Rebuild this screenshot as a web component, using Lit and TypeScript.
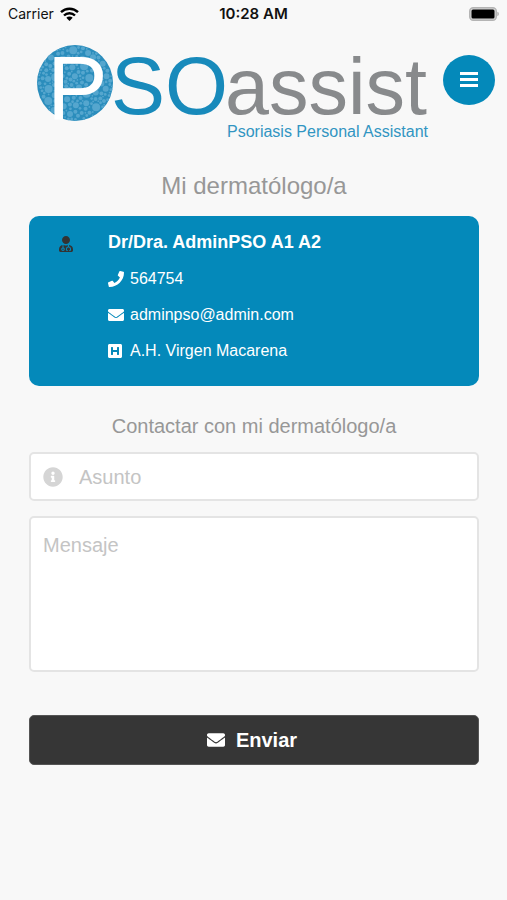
import { LitElement, html, css, svg } from "lit";
import { customElement, property, state } from "lit/decorators.js";

interface Glyph {
  box: string;
  path: string;
}

const GLYPHS: Record<string, Glyph> = {
  envelope: {
    box: "0 0 512 512",
    path: "M502.3 190.8c3.9-3.1 9.7-.2 9.7 4.7V400c0 26.5-21.5 48-48 48H48c-26.5 0-48-21.5-48-48V195.6c0-5 5.7-7.8 9.7-4.7 22.4 17.4 52.1 39.5 154.1 113.6 21.1 15.4 56.7 47.8 92.2 47.6 35.7.3 72-32.8 92.3-47.6 102-74.1 131.6-96.3 154-113.7zM256 320c23.2.4 56.6-29.2 73.4-41.4 132.7-96.3 142.8-104.7 173.4-128.7 5.8-4.5 9.2-11.5 9.2-18.9v-19c0-26.5-21.5-48-48-48H48c-26.5 0-48 21.5-48 48v19c0 7.4 3.4 14.3 9.2 18.9 30.6 23.9 40.7 32.4 173.4 128.7 16.8 12.2 50.2 41.8 73.4 41.4z",
  },
  phone: {
    box: "0 0 512 512",
    path: "M493.4 24.6l-104-24c-11.3-2.6-22.9 3.3-27.5 13.9l-48 112c-4.2 9.8-1.4 21.3 6.9 28l60.6 49.6c-36 76.7-98.9 140.5-177.2 177.2l-49.6-60.6c-6.8-8.3-18.2-11.1-28-6.9l-112 48C3.9 366.5-2 378.1.6 389.4l24 104C27.1 504.2 36.7 512 48 512c256.1 0 464-207.5 464-464 0-11.2-7.7-20.9-18.6-23.4z",
  },
  hospital: {
    box: "0 0 512 512",
    path: "M448 80v352c0 26.51-21.49 48-48 48H48c-26.51 0-48-21.49-48-48V80c0-26.51 21.49-48 48-48h352c26.51 0 48 21.49 48 48zm-112 48h-32c-8.837 0-16 7.163-16 16v80H160v-80c0-8.837-7.163-16-16-16h-32c-8.837 0-16 7.163-16 16v224c0 8.837 7.163 16 16 16h32c8.837 0 16-7.163 16-16v-80h128v80c0 8.837 7.163 16 16 16h32c8.837 0 16-7.163 16-16V144c0-8.837-7.163-16-16-16z",
  },
  info: {
    box: "0 0 512 512",
    path: "M256 8C119.043 8 8 119.083 8 256c0 136.997 111.043 248 248 248s248-111.003 248-248C504 119.083 392.957 8 256 8zm0 110c23.196 0 42 18.804 42 42s-18.804 42-42 42-42-18.804-42-42 18.804-42 42-42zm56 254c0 6.627-5.373 12-12 12h-88c-6.627 0-12-5.373-12-12v-24c0-6.627 5.373-12 12-12h12v-64h-12c-6.627 0-12-5.373-12-12v-24c0-6.627 5.373-12 12-12h64c6.627 0 12 5.373 12 12v100h12c6.627 0 12 5.373 12 12v24z",
  },
  doctor: {
    box: "0 0 448 512",
    path: "M224 256c70.7 0 128-57.3 128-128S294.7 0 224 0 96 57.3 96 128s57.3 128 128 128zM104 424c0 13.3 10.7 24 24 24s24-10.7 24-24-10.7-24-24-24-24 10.7-24 24zm216-135.4v49c36.5 7.4 64 39.8 64 78.4v41.7c0 7.6-5.4 14.2-12.9 15.7l-32.2 6.4c-4.3.9-8.5-1.9-9.4-6.3l-3.1-15.7c-.9-4.3 1.9-8.6 6.3-9.4l19.3-3.9V416c0-62.8-96-65.1-96 1.9v26.7l19.3 3.9c4.3.9 7.1 5.1 6.3 9.4l-3.1 15.7c-.9 4.3-5.1 7.1-9.4 6.3l-31.2-4.2c-7.9-1.1-13.8-7.8-13.8-15.9V416c0-38.6 27.5-70.9 64-78.4v-45.2c-2.2.7-4.4 1.1-6.6 1.9-18 6.3-37.3 9.8-57.4 9.8s-39.4-3.5-57.4-9.8c-7.4-2.6-14.9-4.2-22.6-5.2v81.6c23.1 6.9 40 28.1 40 53.4 0 30.9-25.1 56-56 56s-56-25.1-56-56c0-25.3 16.9-46.5 40-53.4v-80.4C48.5 301 0 355.8 0 422.4v44.8C0 491.9 20.1 512 44.8 512h358.4c24.7 0 44.8-20.1 44.8-44.8v-44.8c0-72-56.8-130.3-128-133.8z",
  },
  bars: {
    box: "0 0 18 16",
    path: "M0 0h18v3H0zM0 6h18v3H0zM0 12h18v3H0z",
  },
};

@customElement("ui-glyph")
export class UiGlyph extends LitElement {
  @property() name = "envelope";

  static styles = css`
    :host {
      display: block;
      flex: none;
    }
    .glyph {
      display: block;
      width: 100%;
      height: 100%;
      fill: currentColor;
    }
  `;

  render() {
    const glyph = GLYPHS[this.name];
    return html`<svg class="glyph" viewBox=${glyph.box} aria-hidden="true">
      <path fill-rule="evenodd" d=${glyph.path}></path>
    </svg>`;
  }
}

interface Cell {
  x: number;
  y: number;
  r: number;
}

/** Packs non-overlapping cells of shrinking size into the emblem disc. */
function packCells(cx: number, cy: number, radius: number): Cell[] {
  let seed = 20;
  const next = () => {
    seed = (seed * 1103515245 + 12345) % 2147483648;
    return seed / 2147483648;
  };
  const cells: Cell[] = [];
  for (const [r, tries] of [[4, 30], [3, 60], [2, 500], [1.4, 1500], [0.9, 2000]]) {
    for (let i = 0; i < tries; i++) {
      const x = cx + (next() * 2 - 1) * radius;
      const y = cy + (next() * 2 - 1) * radius;
      if (Math.hypot(x - cx, y - cy) > radius - r) continue;
      if (cells.every((c) => Math.hypot(c.x - x, c.y - y) > c.r + r + 0.3)) {
        cells.push({ x, y, r });
      }
    }
  }
  return cells;
}

const CELLS = packCells(38, 39, 38);

@customElement("brand-logo")
export class BrandLogo extends LitElement {
  static styles = css`
    :host {
      display: block;
    }
    .logo {
      display: block;
      width: 100%;
      height: auto;
      overflow: visible;
      font-family: "Liberation Sans", Arial, sans-serif;
    }
    .disc {
      fill: #2b8dbc;
    }
    .cell {
      fill: #55a6ce;
    }
    .initial {
      fill: #fff;
      font-size: 91px;
    }
    .strong {
      fill: #188abb;
      font-size: 81px;
    }
    .soft {
      fill: #888a8c;
      font-size: 79px;
    }
    .tagline {
      fill: #3195c2;
      font-size: 16px;
    }
  `;

  render() {
    return html`<svg class="logo" viewBox="0 0 392 98" role="img" aria-label="PSOassist, Psoriasis Personal Assistant">
      <circle class="disc" cx="38" cy="39" r="38"></circle>
      ${CELLS.map((c) => svg`<circle class="cell" cx=${c.x} cy=${c.y} r=${c.r}></circle>`)}
      <text class="initial" x="10" y="75">P</text>
      <text class="strong" x="74" y="70">SO</text>
      <text class="soft" x="188" y="70">assist</text>
      <text class="tagline" x="190" y="93">Psoriasis Personal Assistant</text>
    </svg>`;
  }
}

@customElement("status-bar")
export class StatusBar extends LitElement {
  static styles = css`
    :host {
      display: grid;
      grid-template-columns: 1fr auto 1fr;
      align-items: center;
      height: 28px;
      padding: 0 8px;
      font: 14px/20px Inter, sans-serif;
      color: #111;
    }
    .carrier {
      display: flex;
      align-items: center;
      gap: 6px;
    }
    .wifi {
      width: 19px;
      height: 14px;
    }
    .time {
      font-size: 15px;
      font-weight: 600;
    }
    .battery {
      justify-self: end;
      width: 30px;
      height: 14px;
    }
  `;

  render() {
    return html`
      <div class="carrier">
        <span>Carrier</span>
        <svg class="wifi" viewBox="0 0 19 14" aria-hidden="true">
          <g fill="none" stroke="#000" stroke-width="2.4">
            <path d="M1 5.2a12.2 12.2 0 0 1 17 0"></path>
            <path d="M4 8.5a7.8 7.8 0 0 1 11 0"></path>
          </g>
          <path d="M9.500 14L6.300 10.700a4.600 4.600 0 0 1 6.400 0z"></path>
        </svg>
      </div>
      <div class="time">10:28 AM</div>
      <svg class="battery" viewBox="0 0 30 14" aria-hidden="true">
        <rect x=".7" y=".7" width="26.600" height="12.600" rx="3.500" fill="#d4d4d4" stroke="#b4b4b4" stroke-width="1.400"></rect>
        <rect x="2.500" y="2.500" width="23" height="9" rx="1.500"></rect>
        <path d="M28.400 4.800a2.400 2.400 0 0 1 0 4.400z" fill="#a9a9a9"></path>
      </svg>
    `;
  }
}

@customElement("app-root")
export class AppRoot extends LitElement {
  @state() private subject = "";
  @state() private message = "";

  static styles = css`
    :host {
      display: block;
      min-height: 100vh;
      background: #f8f8f8;
      font-family: "Liberation Sans", Arial, sans-serif;
    }
    .header {
      display: flex;
      align-items: flex-start;
      gap: 14px;
      padding: 16px 12px 0 37px;
    }
    .logo {
      flex: 1;
    }
    .menu {
      display: grid;
      place-items: center;
      width: 52px;
      height: 50px;
      margin: 11px 0 0;
      padding: 0;
      border: 0;
      border-radius: 50%;
      background: #0489ba;
      color: #fff;
    }
    .menu-icon {
      width: 18px;
      height: 16px;
    }
    .main {
      padding: 28px 28px 40px 29px;
    }
    .title,
    .subtitle {
      margin: 0;
      font-weight: 400;
      text-align: center;
      color: #979797;
    }
    .title {
      font-size: 24px;
      line-height: 32px;
    }
    .subtitle {
      margin-top: 28px;
      font-size: 20px;
      line-height: 24px;
    }
    .card {
      display: flex;
      align-items: flex-start;
      gap: 34px;
      margin-top: 14px;
      padding: 14px 29px 23px;
      border-radius: 10px;
      background: #0489ba;
      color: #fff;
    }
    .doctor {
      width: 16px;
      height: 16px;
      margin-top: 6px;
      color: #333;
    }
    .name {
      margin: 0 0 13px;
      font-size: 18px;
      line-height: 24px;
    }
    .contacts {
      display: grid;
      gap: 12px;
      margin: 0;
      padding: 0;
      list-style: none;
      font-size: 16px;
      line-height: 24px;
    }
    .contact {
      display: flex;
      align-items: center;
      gap: 6px;
    }
    .contact-icon {
      width: 16px;
      height: 16px;
    }
    .link {
      color: inherit;
      text-decoration: none;
    }
    .form {
      display: grid;
      gap: 15px;
      margin-top: 14px;
    }
    .field,
    .message {
      box-sizing: border-box;
      border: 2px solid #e4e4e4;
      border-radius: 5px;
      background: #fff;
    }
    .field {
      display: flex;
      align-items: center;
      gap: 16px;
      height: 49px;
      padding: 0 12px;
    }
    .field-icon {
      width: 20px;
      height: 20px;
      color: #d5d5d5;
    }
    .subject,
    .message {
      font: 20px/24px "Liberation Sans", Arial, sans-serif;
      color: #555;
      outline: none;
    }
    .subject {
      flex: 1;
      min-width: 0;
      padding: 0;
      border: 0;
      background: none;
    }
    .subject::placeholder,
    .message::placeholder {
      color: #c4c4c4;
      opacity: 1;
    }
    .message {
      display: block;
      width: 100%;
      height: 156px;
      margin: 0;
      padding: 15px 12px;
      resize: none;
    }
    .send {
      display: flex;
      align-items: center;
      justify-content: center;
      gap: 11px;
      width: 100%;
      height: 50px;
      margin-top: 28px;
      padding: 0 4px 0 0;
      border: 1px solid #555;
      border-radius: 5px;
      background: #363636;
      color: #fff;
      font: bold 20px/24px "Liberation Sans", Arial, sans-serif;
    }
    .send-icon {
      width: 18px;
      height: 18px;
    }
  `;

  private send(event: Event) {
    event.preventDefault();
    this.subject = "";
    this.message = "";
  }

  render() {
    return html`
      <status-bar></status-bar>
      <header class="header">
        <brand-logo class="logo"></brand-logo>
        <button class="menu" type="button" aria-label="Menú">
          <ui-glyph class="menu-icon" name="bars"></ui-glyph>
        </button>
      </header>
      <main class="main">
        <h1 class="title">Mi dermatólogo/a</h1>
        <section class="card">
          <ui-glyph class="doctor" name="doctor"></ui-glyph>
          <div>
            <h2 class="name">Dr/Dra. AdminPSO A1 A2</h2>
            <ul class="contacts">
              <li class="contact">
                <ui-glyph class="contact-icon" name="phone"></ui-glyph>
                <a class="link" href="tel:564754">564754</a>
              </li>
              <li class="contact">
                <ui-glyph class="contact-icon" name="envelope"></ui-glyph>
                <a class="link" href="mailto:adminpso@admin.com">adminpso@admin.com</a>
              </li>
              <li class="contact">
                <ui-glyph class="contact-icon" name="hospital"></ui-glyph>
                <span>A.H. Virgen Macarena</span>
              </li>
            </ul>
          </div>
        </section>
        <h2 class="subtitle">Contactar con mi dermatólogo/a</h2>
        <form class="form" @submit=${this.send}>
          <label class="field">
            <ui-glyph class="field-icon" name="info"></ui-glyph>
            <input
              class="subject"
              type="text"
              placeholder="Asunto"
              aria-label="Asunto"
              .value=${this.subject}
              @input=${(e: Event) => (this.subject = (e.target as HTMLInputElement).value)}
            />
          </label>
          <textarea
            class="message"
            placeholder="Mensaje"
            aria-label="Mensaje"
            .value=${this.message}
            @input=${(e: Event) => (this.message = (e.target as HTMLTextAreaElement).value)}
          ></textarea>
          <button class="send" type="submit">
            <ui-glyph class="send-icon" name="envelope"></ui-glyph>
            <span>Enviar</span>
          </button>
        </form>
      </main>
    `;
  }
}
